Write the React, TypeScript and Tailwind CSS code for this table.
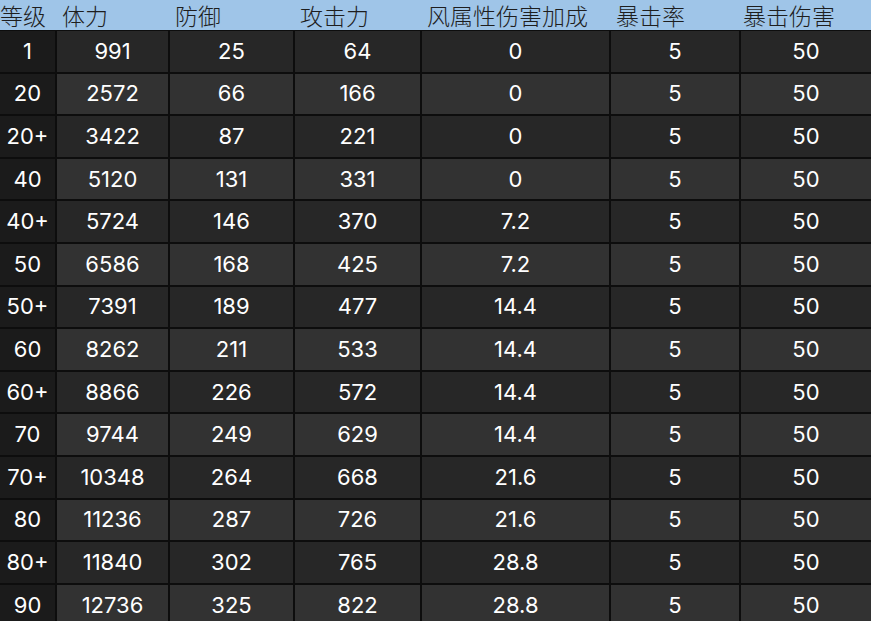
const headers = ["等级", "体力", "防御", "攻击力", "风属性伤害加成", "暴击率", "暴击伤害"];

const rows: (string | number)[][] = [
  ["1", 991, 25, 64, "0", 5, 50],
  ["20", 2572, 66, 166, "0", 5, 50],
  ["20+", 3422, 87, 221, "0", 5, 50],
  ["40", 5120, 131, 331, "0", 5, 50],
  ["40+", 5724, 146, 370, "7.2", 5, 50],
  ["50", 6586, 168, 425, "7.2", 5, 50],
  ["50+", 7391, 189, 477, "14.4", 5, 50],
  ["60", 8262, 211, 533, "14.4", 5, 50],
  ["60+", 8866, 226, 572, "14.4", 5, 50],
  ["70", 9744, 249, 629, "14.4", 5, 50],
  ["70+", 10348, 264, 668, "21.6", 5, 50],
  ["80", 11236, 287, 726, "21.6", 5, 50],
  ["80+", 11840, 302, 765, "28.8", 5, 50],
  ["90", 12736, 325, 822, "28.8", 5, 50],
];

const cols = "grid grid-cols-[55px_111px_123px_125px_187px_128px_1fr]";

export default function App() {
  return (
    <div className="w-[871px] h-[621px] overflow-hidden bg-[#0d0d0d]">
      {/* header */}
      <div
        className={`${cols} h-[30px] bg-[#9fc5e8] text-[#1e1e1e] text-[23px] font-light leading-none gap-x-[2px]`}
        style={{ fontFamily: '"Noto Sans CJK SC", "Noto Sans", sans-serif' }}
      >
        {headers.map((h, i) => (
          <div
            key={h}
            className={`flex items-center whitespace-nowrap ${i === 0 ? "pl-0" : i === 6 ? "pl-[2px]" : "pl-[5px]"}`}
          >
            {h}
          </div>
        ))}
      </div>

      {/* body */}
      <div
        className={`${cols} gap-x-[2px] gap-y-[2px] pt-[1px] text-white text-[22px]`}
        style={{ fontFamily: 'Inter, "Open Sans", sans-serif' }}
      >
        {rows.map((r, ri) =>
          r.map((v, ci) => (
            <div
              key={`${ri}-${ci}`}
              className={`h-[40.6px] flex items-center justify-center ${
                ci === 0 ? "bg-[#1b1b1b]" : ri % 2 === 0 ? "bg-[#272727]" : "bg-[#323232]"
              }`}
            >
              {v}
            </div>
          ))
        )}
      </div>
    </div>
  );
}
